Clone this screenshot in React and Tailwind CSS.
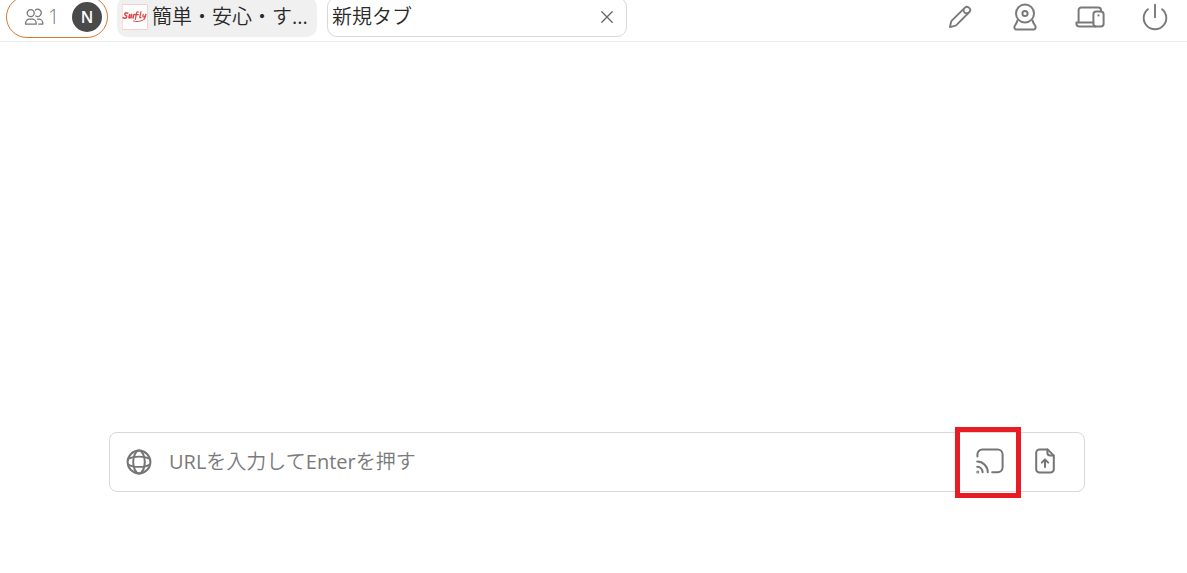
const stroke = {
  fill: 'none',
  stroke: 'currentColor',
  strokeWidth: 2,
  strokeLinecap: 'round',
  strokeLinejoin: 'round',
  'aria-hidden': true,
};

function UsersIcon() {
  return (
    <svg {...stroke} strokeWidth="1.3" viewBox="0 0 20 18" className="h-[18px] w-5 shrink-0">
      <circle cx="6.7" cy="5.1" r="3.5" />
      <path d="M11.4 2A3.6 3.6 0 1 1 11.8 8" />
      <path d="M1.6 16.2v-1a4 4 0 0 1 4-4h2.6a4 4 0 0 1 4 4v1z" />
      <path d="M13.4 11.2h1.4a4 4 0 0 1 4 4v1h-4" />
    </svg>
  );
}

function PencilIcon() {
  return (
    <svg {...stroke} strokeWidth="1.9" viewBox="0 0 24 24" className="size-6">
      <path d="M1.9 22.1L3 17.2c.2-.8.5-1.3 1-1.8L17 2.6a2.7 2.7 0 0 1 3.8 0l.6.6a2.7 2.7 0 0 1 0 3.8L8.6 19.8c-.5.5-1 .8-1.8 1z" />
      <path d="M15.6 4.2c-.6 2.6 1.4 4.6 4.2 4" />
    </svg>
  );
}

function WebcamIcon() {
  return (
    <svg {...stroke} viewBox="0 0 24 28" className="h-7 w-6">
      <circle cx="12" cy="10.5" r="9" />
      <circle cx="12" cy="10.5" r="2.6" />
      <path d="M4.4 17.4c-.2 2-1.4 3.4-2.5 5.2-1.1 2-.3 4 1.8 4h16.6c2.1 0 2.9-2 1.8-4-1.1-1.8-2.3-3.2-2.5-5.2" />
    </svg>
  );
}

function DevicesIcon() {
  return (
    <svg {...stroke} viewBox="0 0 30 22" className="h-[22px] w-[30px]">
      <path d="M3.6 16.2V4a2.6 2.6 0 0 1 2.6-2.6h17.2A2.6 2.6 0 0 1 26 4v1.4" />
      <path d="M18.4 16.4H1.4v1.2a3 3 0 0 0 3 3h16.2" />
      <rect x="18.4" y="5.6" width="10.2" height="15" rx="2.8" />
      <circle cx="23.5" cy="9.4" r=".5" strokeWidth="1.2" />
    </svg>
  );
}

function PowerIcon() {
  return (
    <svg {...stroke} strokeWidth="1.9" viewBox="0 0 26 28" className="h-7 w-[26px]">
      <path d="M13 1.6v12.6M5.9 6.2a11.3 11.3 0 1 0 14.2 0" />
    </svg>
  );
}

function GlobeIcon() {
  return (
    <svg {...stroke} viewBox="0 0 26 26" className="size-[26px] shrink-0">
      <circle cx="13" cy="13" r="11.4" />
      <ellipse cx="13" cy="13" rx="5.8" ry="11.4" />
      <path d="M2.6 9.6c5.4-2.6 15.4-2.6 20.8 0M2.2 15.4c5.4 3.4 16.2 3.4 21.6 0" strokeWidth="1.8" />
    </svg>
  );
}

function CastIcon() {
  return (
    <svg {...stroke} viewBox="0 0 28 26" className="h-[26px] w-7">
      <path d="M1.4 8.4V6.6a5 5 0 0 1 5-5h15.2a5 5 0 0 1 5 5v12.6a5 5 0 0 1-5 5h-5.4" />
      <path d="M1.2 13.6c5.8 0 10.6 4.8 10.6 10.6M1.2 18.8a5.4 5.4 0 0 1 5.4 5.4" />
      <circle cx="1.8" cy="24" r=".5" />
    </svg>
  );
}

function UploadIcon() {
  return (
    <svg {...stroke} viewBox="0 0 20 26" className="h-[26px] w-5">
      <path d="M12.6 1.4H4.6A3.4 3.4 0 0 0 1.2 4.8v16.4a3.4 3.4 0 0 0 3.4 3.4h10.8a3.4 3.4 0 0 0 3.4-3.4V7.6z" />
      <path d="M12.4 1.6v3.2a2.8 2.8 0 0 0 2.8 2.8h3.4M10 19v-7.2M6.8 14.6L10 11.4l3.2 3.2" />
    </svg>
  );
}

function SurflyLogo() {
  return (
    <svg viewBox="0 0 26 26" className="size-[26px] shrink-0" fill="none" stroke="#dc4a4a" strokeLinecap="round" strokeLinejoin="round" aria-hidden="true">
      <rect x=".5" y=".5" width="25" height="25" fill="#fff" stroke="#f5d0d0" />
      <path strokeWidth="1.6" d="M5.7 9.1c-1.5-.8-3.2.1-2.8 1.3.4 1.1 2.3 1.3 1.7 2.7-.5 1.2-2.4 1.5-3.5.5M7.6 10.6l-.7 2.8c.1 1 1.4.4 2-.6l.6-2.2-.6 3.2M11 14l.6-3.2c.6-.4 1.1-.4 1.6-.2" />
      <path strokeWidth="1.3" d="M16.4 8c-1.1-.6-1.7.2-1.9 1.4l-1.1 6M13.4 10.6h3M18.9 7.8l-1.1 5.4c0 .8.7.7 1.2.2M21.2 10.3c-.5 1.6-.5 2.8.4 2.8s1.8-1.4 2.3-2.8c-.5 2-.8 4.4-2.2 5.2" />
      <path strokeWidth="1" d="M11.4 17c2.8 1.1 6.8.7 9.4-.9" />
    </svg>
  );
}

function CloseIcon() {
  return (
    <svg {...stroke} strokeWidth="1.3" viewBox="0 0 12 12" className="size-3">
      <path d="M.8.8l10.4 10.4M11.2.8L.8 11.2" />
    </svg>
  );
}

export default function App() {
  return (
    <div className="overflow-hidden bg-white font-['Open_Sans','Noto_Sans_CJK_JP_DemiLight','Noto_Sans_CJK_JP',sans-serif] text-xl font-normal text-[#2a2a2a]">
      <header className="-mt-1 flex items-center border-b border-[#ebebeb] pb-[3px] pl-[6px]">
        <button type="button" aria-label="参加者 1" className="flex h-[42px] w-[102px] shrink-0 items-center rounded-full border border-[#d67a30] pr-[5px] pl-[17px] text-[#777]">
          <UsersIcon />
          <span className="ml-1 font-light">1</span>
          <span className="ml-auto flex size-[30px] items-center justify-center rounded-full bg-[#4a4a4a] text-base font-semibold text-white">N</span>
        </button>
        <nav aria-label="タブ" className="ml-[9px] flex min-w-0 gap-[10px]">
          <button type="button" className="flex h-10 w-[200px] items-center gap-1 rounded-[10px] bg-[#f0f0f0] pr-2 pl-[5px] text-left">
            <SurflyLogo />
            <span className="whitespace-nowrap">簡単・安心・す...</span>
          </button>
          <div className="flex h-10 w-[300px] items-center justify-between rounded-[10px] border border-[#d8d8d8] pr-[13px] pl-1">
            <button type="button">新規タブ</button>
            <button type="button" aria-label="タブを閉じる" className="text-[#666]">
              <CloseIcon />
            </button>
          </div>
        </nav>
        <div className="ml-auto flex items-center text-[#7a7a7a]">
          <button type="button" aria-label="描画" className="flex w-[65px] justify-center"><PencilIcon /></button>
          <button type="button" aria-label="カメラ" className="flex w-[65px] justify-center"><WebcamIcon /></button>
          <button type="button" aria-label="デバイス" className="flex w-[65px] justify-center"><DevicesIcon /></button>
          <button type="button" aria-label="終了" className="flex w-[65px] justify-center"><PowerIcon /></button>
        </div>
      </header>
      <main className="pt-[390px] pr-[102px] pb-20 pl-[109px]">
        <form className="flex h-[60px] items-center rounded-lg border border-[#d8d8d8] pr-[29px] pl-4 text-[#757575]">
          <GlobeIcon />
          <input
            type="text"
            aria-label="URL"
            placeholder="URLを入力してEnterを押す"
            className="ml-[17px] h-full min-w-0 flex-1 pb-0.5 outline-none placeholder:text-[#7a7a7a] placeholder:opacity-100"
          />
          <button type="button" aria-label="画面共有" className="relative flex h-[58px] w-14 items-center justify-center pb-0.5 pl-1">
            <CastIcon />
            <span className="absolute -inset-x-[5px] -top-[6px] -bottom-[7px] border-[5px] border-[#e81c25]" />
          </button>
          <button type="button" aria-label="ファイルをアップロード" className="ml-[19px] flex pb-0.5">
            <UploadIcon />
          </button>
        </form>
      </main>
    </div>
  );
}
